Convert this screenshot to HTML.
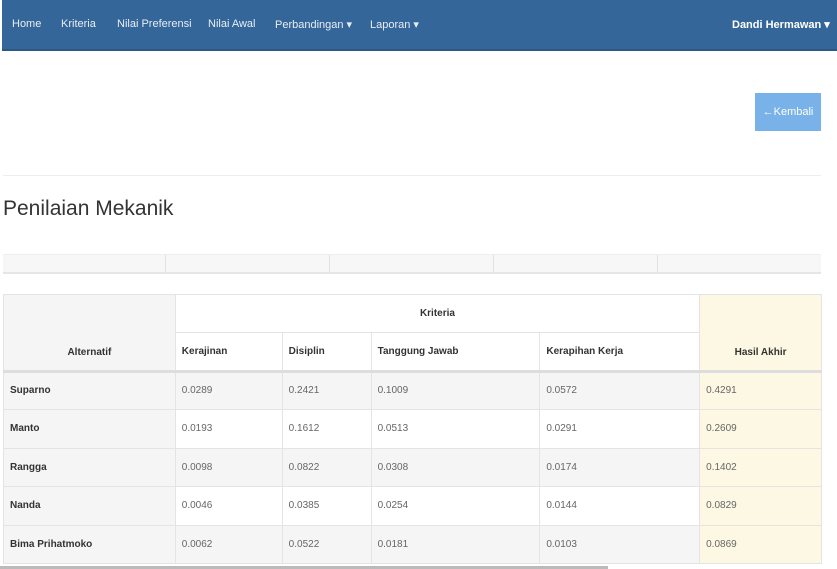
<!DOCTYPE html>
<html><head><meta charset="utf-8"><style>
*{margin:0;padding:0;box-sizing:border-box}
body{width:837px;height:569px;background:#fff;font-family:"Liberation Sans Narrow","Liberation Sans",sans-serif;color:#333;position:relative;overflow:hidden}
.nav{position:absolute;left:2px;top:0;width:835px;height:51px;background:#346699;border-bottom:2px solid #2c5885;color:#e8eef5;font-size:11px}
.nav span{position:absolute;top:18px;white-space:nowrap}
.btn{position:absolute;left:755px;top:93px;width:66px;height:38px;background:#79b2e8;color:#fff;font-size:11px;text-align:center;line-height:38px}
.hr{position:absolute;left:3px;top:175px;width:818px;height:1px;background:#eee}
h1{position:absolute;left:3px;top:197px;font-weight:normal;font-size:21px;color:#333;font-family:"Liberation Sans",sans-serif}
.strip{position:absolute;left:3px;top:254px;width:818px;height:20px;background:#f7f7f7;border-top:1px solid #eee;border-bottom:2px solid #e6e6e6}
.strip i{position:absolute;top:0;width:1px;height:18px;background:#e2e2e2}
table{position:absolute;left:3px;top:294px;width:819px;border-collapse:collapse;font-size:10px}
td,th{border:1px solid #e4e4e4;padding:0 6px;height:38.5px;text-align:left}
th{font-weight:bold}
.g{background:#f5f5f5}
.y{background:#fcf8e3}
tbody td:first-child{font-weight:bold;background:#f5f5f5}
tbody tr:nth-child(odd) td{background:#f5f5f5}
tbody td.y, tbody tr:nth-child(odd) td.y{background:#fcf8e3}
td{color:#666}
tbody td:first-child{color:#333}
.bl{position:absolute;left:0;top:566px;width:608px;height:3px;background:#bbb}
</style></head><body>
<div class="nav">
<span style="left:10px">Home</span><span style="left:59px">Kriteria</span><span style="left:115px">Nilai Preferensi</span><span style="left:206px">Nilai Awal</span><span style="left:273px">Perbandingan ▾</span><span style="left:368px">Laporan ▾</span>
<span style="left:730px;font-weight:bold;color:#fff">Dandi Hermawan ▾</span>
</div>
<div class="btn">&#x2190;Kembali</div>
<div class="hr"></div>
<h1>Penilaian Mekanik</h1>
<div class="strip"><i style="left:162px"></i><i style="left:326px"></i><i style="left:490px"></i><i style="left:654px"></i></div>
<table>
<colgroup><col style="width:172px"><col style="width:107px"><col style="width:89px"><col style="width:169px"><col style="width:160px"><col style="width:122px"></colgroup>
<thead>
<tr><th rowspan="2" class="g" style="text-align:center;vertical-align:bottom;padding-bottom:12px">Alternatif</th><th colspan="4" style="text-align:center;height:38px">Kriteria</th><th rowspan="2" class="y" style="text-align:center;vertical-align:bottom;padding-bottom:12px">Hasil Akhir</th></tr>
<tr style="border-bottom:3px solid #ddd"><th>Kerajinan</th><th>Disiplin</th><th>Tanggung Jawab</th><th>Kerapihan Kerja</th></tr>
</thead>
<tbody>
<tr><td>Suparno</td><td>0.0289</td><td>0.2421</td><td>0.1009</td><td>0.0572</td><td class="y">0.4291</td></tr>
<tr><td>Manto</td><td>0.0193</td><td>0.1612</td><td>0.0513</td><td>0.0291</td><td class="y">0.2609</td></tr>
<tr><td>Rangga</td><td>0.0098</td><td>0.0822</td><td>0.0308</td><td>0.0174</td><td class="y">0.1402</td></tr>
<tr><td>Nanda</td><td>0.0046</td><td>0.0385</td><td>0.0254</td><td>0.0144</td><td class="y">0.0829</td></tr>
<tr><td>Bima Prihatmoko</td><td>0.0062</td><td>0.0522</td><td>0.0181</td><td>0.0103</td><td class="y">0.0869</td></tr>
</tbody>
</table>
<div class="bl"></div>
</body></html>
